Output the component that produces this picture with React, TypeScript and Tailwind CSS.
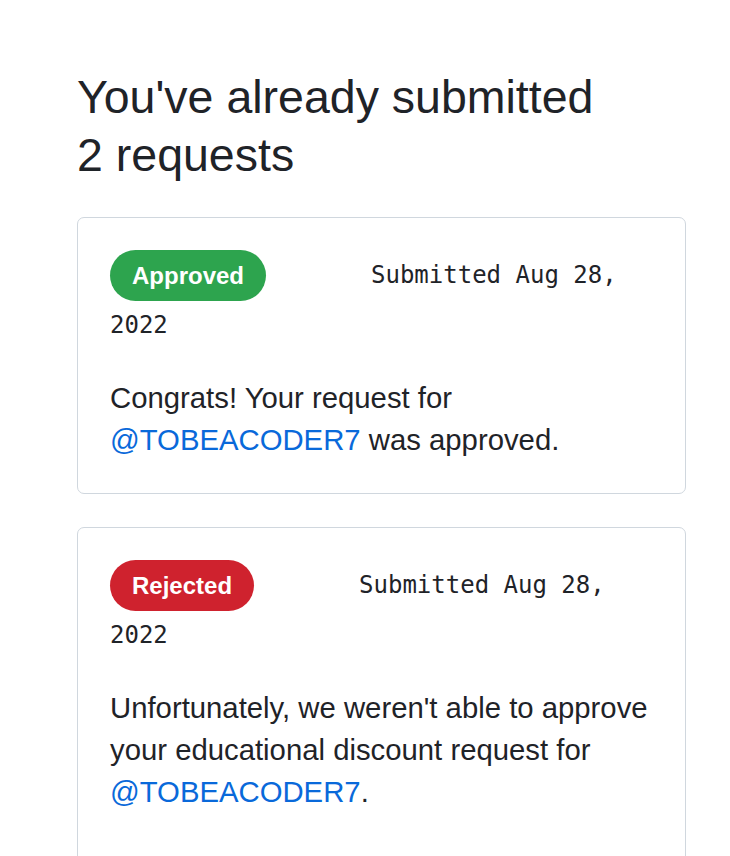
import React from "react"

type Request = {
    status: "approved" | "rejected"
    date: string
    handle: string
}

const requests: Request[] = [
    { status: "approved", date: "Aug 28, 2022", handle: "@TOBEACODER7" },
    { status: "rejected", date: "Aug 28, 2022", handle: "@TOBEACODER7" },
]

const sans = "font-['Liberation_Sans','Helvetica',sans-serif]"
const mono = "font-['DejaVu_Sans_Mono','Liberation_Mono',monospace]"

const RequestCard = ({ req }: { req: Request }) => {
    const approved = req.status === "approved"
    return (
        <div className="border border-[#d0d7de] rounded-[7px] bg-white p-8">
            <div className={`${mono} text-[24px] leading-[49px] text-[#1f2328]`}>
                <span
                    className={`${sans} inline-flex items-center align-middle h-[51px] px-[22px] rounded-full text-white font-bold text-[24px] ${
                        approved ? "bg-[#2da44e]" : "bg-[#cf222e]"
                    }`}
                >
                    {approved ? "Approved" : "Rejected"}
                </span>
                <span className="ml-[105px]">Submitted {req.date}</span>
            </div>
            <p className={`${sans} mt-[27px] text-[29.3px] leading-[42px] text-[#1f2328]`}>
                {approved ? (
                    <>
                        Congrats! Your request for{" "}
                        <a className="text-[#0969da]">{req.handle}</a> was approved.
                    </>
                ) : (
                    <>
                        Unfortunately, we weren't able to approve your educational discount request for{" "}
                        <a className="text-[#0969da]">{req.handle}</a>.
                    </>
                )}
            </p>
            {!approved && <div className="h-[60px]" />}
        </div>
    )
}

export default function App() {
    return (
        <div className="min-h-screen bg-white">
            <div className="pl-[77px] pr-[44px] pt-[68px]">
                <h2 className={`${sans} text-[46.5px] leading-[58px] text-[#1f2328] w-[530px]`}>
                    You've already submitted 2 requests
                </h2>
                <div className="mt-[33px] flex flex-col gap-[33px]">
                    {requests.map((r, i) => (
                        <RequestCard key={i} req={r} />
                    ))}
                </div>
            </div>
        </div>
    )
}
